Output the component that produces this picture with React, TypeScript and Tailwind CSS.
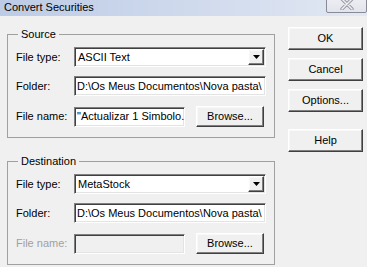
import React from "react";

const sunken =
   "border border-t-[#808080] border-l-[#808080] border-b-white border-r-white shadow-[inset_1px_1px_0_#404040,inset_-1px_-1px_0_#e3e3e3]";
const raised =
   "border border-t-white border-l-white border-b-[#404040] border-r-[#404040] shadow-[inset_-1px_-1px_0_#808080,inset_1px_1px_0_#f8f8f8]";

function Button({ label, className = "" }: { label: string; className?: string }) {
   return (
      <div className={`flex items-center justify-center bg-[#f0f0f0] ${raised} ${className}`}>
         {label}
      </div>
   );
}

function Combo({ value }: { value: string }) {
   return (
      <div className={`flex items-center h-[20px] w-[192px] bg-white ${sunken}`}>
         <span className="flex-1 pl-[3px] whitespace-nowrap overflow-hidden">{value}</span>
         <div className={`flex items-center justify-center w-[16px] h-[16px] mr-[1px] bg-[#f0f0f0] ${raised}`}>
            <svg width="7" height="4" viewBox="0 0 7 4">
               <path d="M0 0h7L3.5 4z" fill="#000" />
            </svg>
         </div>
      </div>
   );
}

function Edit({ value = "", width, disabled }: { value?: string; width: string; disabled?: boolean }) {
   return (
      <div
         className={`flex items-center h-[20px] ${width} ${disabled ? "bg-[#f0f0f0]" : "bg-white"} ${sunken}`}
      >
         <span className="pl-[2px] whitespace-nowrap overflow-hidden">{value}</span>
      </div>
   );
}

function Row({
   label,
   disabled,
   className = "",
   children,
}: {
   label: string;
   disabled?: boolean;
   className?: string;
   children: React.ReactNode;
}) {
   return (
      <div className={`flex items-center ${className}`}>
         <span className={`w-[58px] shrink-0 ${disabled ? "text-[#a0a0a0]" : ""}`}>{label}</span>
         {children}
      </div>
   );
}

function Group({
   title,
   className = "",
   fileType,
   fileName,
   nameDisabled,
}: {
   title: string;
   className?: string;
   fileType: string;
   fileName: string;
   nameDisabled?: boolean;
}) {
   return (
      <fieldset className={`border border-[#a0a0a0] px-[8px] pt-[6px] pb-[10px] ${className}`}>
         <legend className="ml-[2px] px-[3px]">{title}</legend>
         <Row label="File type:" className="h-[20px]">
            <Combo value={fileType} />
         </Row>
         <Row label="Folder:" className="h-[20px] mt-[9px]">
            <Edit value="D:\Os Meus Documentos\Nova pasta\" width="w-[192px]" />
         </Row>
         <Row label="File name:" disabled={nameDisabled} className="h-[21px] mt-[10px]">
            <Edit value={fileName} width="w-[111px]" disabled={nameDisabled} />
            <Button label="Browse..." className="ml-[11px] w-[68px] h-[21px]" />
         </Row>
      </fieldset>
   );
}

export default function App() {
   return (
      <div className="w-[367px] h-[267px] overflow-hidden bg-[#f0f0f0] font-['Liberation_Sans',Arial,sans-serif] text-[11px] leading-[13px] text-black">
         <div className="h-[16px] flex items-start justify-between bg-gradient-to-r from-[#bccbe6] to-[#e2e8f3]">
            <span className="pl-[4px] pt-[1px]">Convert Securities</span>
            <div className="-mt-[10px] w-[41px] h-[23px] flex items-center justify-center border border-[#8a8a96] rounded-[2px] bg-gradient-to-b from-[#f4f4f8] to-[#e2e4ec]">
               <svg width="14" height="12" viewBox="0 0 14 12" className="mt-[4px]">
                  <path d="M2 1l10 10M12 1L2 11" stroke="#9a9aa4" strokeWidth="3.4" strokeLinecap="round" />
                  <path d="M2 1l10 10M12 1L2 11" stroke="#f2f2f6" strokeWidth="1.4" strokeLinecap="round" />
               </svg>
            </div>
         </div>
         <div className="flex">
            <div className="ml-[7px] w-[268px] flex flex-col">
               <Group title="Source" className="mt-[12px]" fileType="ASCII Text" fileName={'"Actualizar 1 Simbolo.'} />
               <Group
                  title="Destination"
                  className="mt-[17px]"
                  fileType="MetaStock"
                  fileName=""
                  nameDisabled
               />
            </div>
            <div className="ml-[13px] mt-[11px] w-[75px] flex flex-col gap-[8px]">
               <Button label="OK" className="h-[23px]" />
               <Button label="Cancel" className="h-[23px]" />
               <Button label="Options..." className="h-[23px]" />
               <Button label="Help" className="h-[23px] mt-[9px]" />
            </div>
         </div>
      </div>
   );
}
